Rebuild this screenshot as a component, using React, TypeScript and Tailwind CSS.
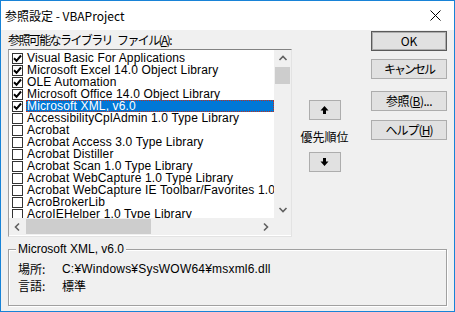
import type { ReactNode } from "react";

const jp = "font-['Noto_Sans_CJK_JP',sans-serif]";
const ui = "font-['Liberation_Sans','Noto_Sans_CJK_JP',sans-serif]";

const libraries = [
  { name: "Visual Basic For Applications", checked: true },
  { name: "Microsoft Excel 14.0 Object Library", checked: true },
  { name: "OLE Automation", checked: true },
  { name: "Microsoft Office 14.0 Object Library", checked: true },
  { name: "Microsoft XML, v6.0", checked: true, selected: true },
  { name: "AccessibilityCplAdmin 1.0 Type Library", checked: false },
  { name: "Acrobat", checked: false },
  { name: "Acrobat Access 3.0 Type Library", checked: false },
  { name: "Acrobat Distiller", checked: false },
  { name: "Acrobat Scan 1.0 Type Library", checked: false },
  { name: "Acrobat WebCapture 1.0 Type Library", checked: false },
  { name: "Acrobat WebCapture IE Toolbar/Favorites 1.0 Type Library", checked: false },
  { name: "AcroBrokerLib", checked: false },
  { name: "AcroIEHelper 1.0 Type Library", checked: false },
];

function CheckBox({ checked }: { checked: boolean }) {
  return (
    <div className="w-[11px] h-[11px] shrink-0 border border-[#333333] bg-white flex items-center justify-center">
      {checked && (
        <svg width="9" height="9" viewBox="0 0 9 9">
          <path d="M1 4.3 L3.5 6.8 L8 1.5" stroke="#000" strokeWidth="2" fill="none" />
        </svg>
      )}
    </div>
  );
}

function Chevron({ dir }: { dir: "up" | "down" | "left" | "right" }) {
  const d = {
    up: "M1.5 6 L5 2.5 L8.5 6",
    down: "M1.5 3 L5 6.5 L8.5 3",
    left: "M6 1.5 L2.5 5 L6 8.5",
    right: "M3 1.5 L6.5 5 L3 8.5",
  }[dir];
  return (
    <svg width="10" height="10" viewBox="0 0 10 10">
      <path d={d} stroke="#606060" strokeWidth="1.6" fill="none" />
    </svg>
  );
}

function Button({ children, def, tracking }: { children: ReactNode; def?: boolean; tracking?: string }) {
  return (
    <div
      className={`w-[76px] h-[20px] flex items-center justify-center bg-[#e1e1e1] border text-[12px] text-black ${jp} ${tracking ?? ""} ${
        def ? "border-[#5a5a5a] shadow-[inset_0_0_0_1px_#adadad]" : "border-[#adadad]"
      }`}
    >
      {children}
    </div>
  );
}

function ArrowButton({ up }: { up?: boolean }) {
  return (
    <div className="w-[32px] h-[20px] flex items-center justify-center bg-[#e1e1e1] border border-[#adadad]">
      <svg width="9" height="10" viewBox="0 0 9 10">
        {up ? (
          <path d="M4.5 1 L8.5 5.5 L6 5.5 L6 9 L3 9 L3 5.5 L0.5 5.5 Z" fill="#000" />
        ) : (
          <path d="M4.5 9 L8.5 4.5 L6 4.5 L6 1 L3 1 L3 4.5 L0.5 4.5 Z" fill="#000" />
        )}
      </svg>
    </div>
  );
}

export default function App() {
  return (
    <div className="w-[455px] h-[312px] border border-[#1883d7] bg-[#f0f0f0] flex flex-col overflow-hidden">
      {/* Title bar */}
      <div className="h-[29px] shrink-0 bg-white flex items-center justify-between pl-[4px] pr-[13px]">
        <span className={`text-[12px] text-black ${jp}`}>参照設定 - VBAProject</span>
        <svg width="11" height="11" viewBox="0 0 11 11">
          <path d="M0.5 0.5 L10.5 10.5 M10.5 0.5 L0.5 10.5" stroke="#000" strokeWidth="1" />
        </svg>
      </div>

      <div className="flex pl-[7px]">
        {/* Library list */}
        <div className="w-[284px] shrink-0 flex flex-col">
          <div className={`h-[18px] mt-[1px] flex text-[12px] leading-[18px] tracking-[-1.6px] whitespace-nowrap text-black ${jp}`}>
            <span>参照可能なライブラリ</span>
            <span className="w-[5px]" />
            <span>
              ファイル(<span className="underline">A</span>):
            </span>
          </div>
          <div className="h-[188px] border border-t-[#828282] border-l-[#a0a0a0] border-r-[#e3e3e3] border-b-[#e3e3e3] bg-white flex flex-col">
            <div className="flex h-[168px]">
              <div className="flex-1 min-w-0 overflow-hidden pt-[2px]">
                {libraries.map((lib) => (
                  <div key={lib.name} className="h-[12px] flex items-center pl-[3px]">
                    <CheckBox checked={lib.checked} />
                    <div
                      className={`ml-[3px] h-[12px] pl-[1px] flex items-center whitespace-nowrap text-[12px] leading-[12px] tracking-[0.15px] ${ui} ${
                        lib.selected
                          ? "flex-1 bg-[#0078d7] text-white outline outline-1 outline-dotted outline-[#c03020] -outline-offset-1"
                          : "text-black"
                      }`}
                    >
                      {lib.name}
                    </div>
                  </div>
                ))}
              </div>
              <div className="w-[17px] shrink-0 bg-[#f0f0f0] flex flex-col items-center">
                <div className="h-[17px] flex items-center justify-center">
                  <Chevron dir="up" />
                </div>
                <div className="w-[15px] h-[17px] bg-[#cdcdcd]" />
                <div className="flex-1" />
                <div className="h-[17px] flex items-center justify-center">
                  <Chevron dir="down" />
                </div>
              </div>
            </div>
            <div className="flex h-[17px]">
              <div className="flex-1 bg-[#f0f0f0] flex items-center">
                <div className="w-[17px] flex justify-center">
                  <Chevron dir="left" />
                </div>
                <div className="w-[125px] h-[15px] bg-[#cdcdcd]" />
                <div className="flex-1" />
                <div className="w-[17px] flex justify-center">
                  <Chevron dir="right" />
                </div>
              </div>
              <div className="w-[17px] bg-[#f0f0f0]" />
            </div>
          </div>
        </div>

        {/* Priority */}
        <div className="w-[79px] shrink-0 flex flex-col items-center pt-[70px] pr-[14px]">
          <ArrowButton up />
          <div className={`mt-[7px] mb-[5px] text-[12px] leading-[20px] text-black ${jp}`}>優先順位</div>
          <ArrowButton />
        </div>

        {/* Buttons */}
        <div className="flex flex-col pt-[1px]">
          <Button def>OK</Button>
          <div className="mt-[8px]">
            <Button tracking="tracking-[-2px]">キャンセル</Button>
          </div>
          <div className="mt-[12px]">
            <Button tracking="tracking-[-0.5px]">
              参照(<span className="underline">B</span>)...
            </Button>
          </div>
          <div className="mt-[9px]">
            <Button tracking="tracking-[-1px]">
              ヘルプ(<span className="underline">H</span>)
            </Button>
          </div>
        </div>
      </div>

      {/* Details group */}
      <div className="mx-[7px] mt-[12px] h-[57px] border border-[#a0a0a0] shadow-[inset_1px_1px_0_#ffffff,1px_1px_0_#ffffff] relative">
        <div className={`absolute -top-[9px] left-[7px] px-[2px] bg-[#f0f0f0] text-[12px] leading-[16px] text-black ${ui}`}>
          Microsoft XML, v6.0
        </div>
        <div className={`pt-[10px] pl-[9px] text-[12px] text-black ${jp}`}>
          <div className="flex h-[17px] items-center">
            <span className="w-[44px]">場所:</span>
            <span className={`${ui} tracking-[0.2px]`}>C:¥Windows¥SysWOW64¥msxml6.dll</span>
          </div>
          <div className="flex h-[17px] items-center">
            <span className="w-[44px]">言語:</span>
            <span>標準</span>
          </div>
        </div>
      </div>
    </div>
  );
}
